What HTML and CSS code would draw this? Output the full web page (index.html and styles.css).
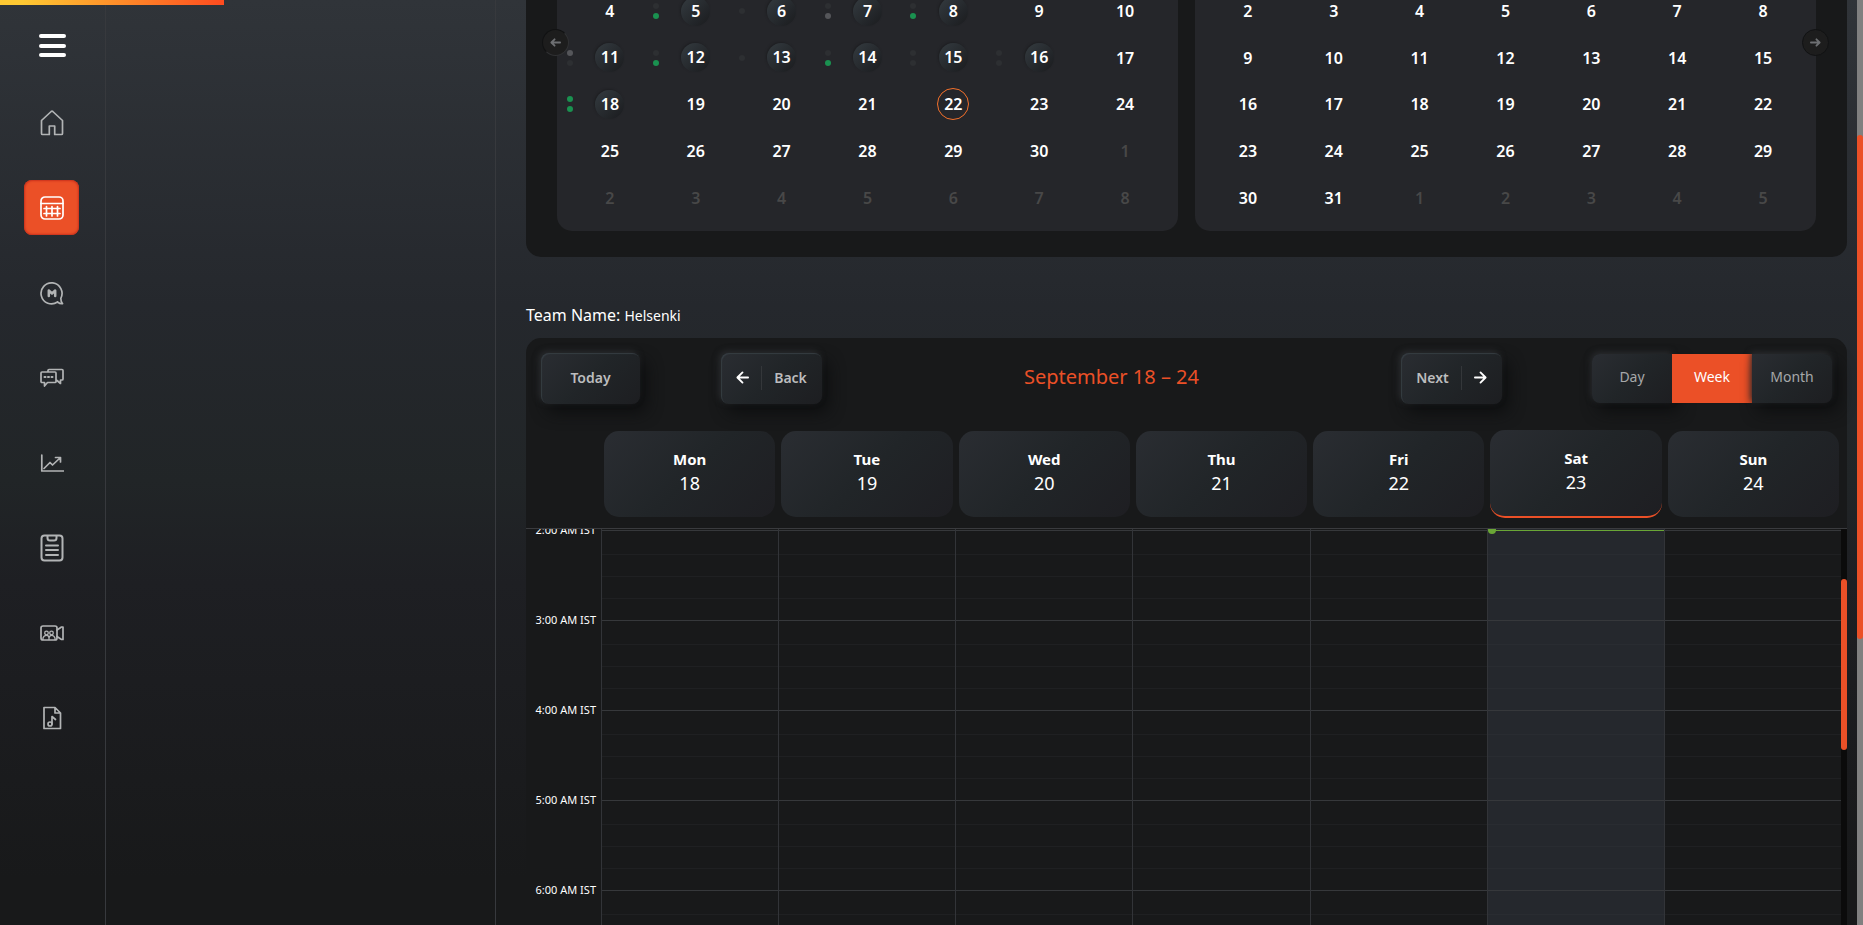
FILE: index.html
```html
<!DOCTYPE html>
<html lang="en">
<head>
<meta charset="utf-8">
<title>Calendar</title>
<link rel="stylesheet" href="styles.css">
</head>
<body>
<div class="progress"></div>
<nav class="sidebar" aria-label="Main">
  <button class="menu" aria-label="Menu"><span></span><span></span><span></span></button>
  <a class="nav-item" href="#home" aria-label="Home"><svg viewBox="0 0 24 26"><path d="M1.5 10.5V23.500q0 1 1 1H9.300V16H14.700V24.500H21.500q1 0 1-1V10.500L12.800 1.500q-.8-.7-1.600 0Z"/></svg></a>
  <a class="nav-item active" href="#calendar" aria-label="Calendar"><svg viewBox="0 0 24 24"><rect x="1" y="1" width="22" height="22" rx="4"/><path d="M1 7.500H23M4 12.500H20M4 17.500H20M6.500 10.500V20M12 10.500V20M17.500 10.500V20"/></svg></a>
  <a class="nav-item" href="#messages" aria-label="Messages"><svg viewBox="0 0 24 24"><path d="M17.500 21A10.500 10.500 0 1 1 20.800 17.300Q20.800 21 22.500 22.700Q20 23 17.500 21"/><path d="M8.800 15V9.500L12 12.500L15.200 9.500V15" stroke-width="2.500"/></svg></a>
  <a class="nav-item" href="#chat" aria-label="Chat"><svg viewBox="0 0 24 24"><path d="M1 7q0-1 1-1H15q1 0 1 1V15.500q0 1-1 1H7.500L4.500 20V16.500H2q-1 0-1-1ZM8 5.500V4.500q0-1 1-1H22q1 0 1 1V13q0 1-1 1H20.500V17.500L17 14.500"/><path d="M4.500 11h1M8 11h1M11.500 11h1" stroke-width="2"/></svg></a>
  <a class="nav-item" href="#reports" aria-label="Reports"><svg viewBox="0 0 24 24"><path d="M1.800 4V20H23.500M4 17.500L10 11.500L12.500 14L20 7M15.500 6.500H20.500V11"/></svg></a>
  <a class="nav-item" href="#notes" aria-label="Notes"><svg class="tall" viewBox="0 0 24 28"><rect x="1.500" y="1.500" width="21" height="25" rx="3"/><path d="M7.500 2V4q0 2.500 2.500 2.500h4Q16.500 6.500 16.500 4V2M6 11.500H18M6 16H18M6 21H18"/></svg></a>
  <a class="nav-item" href="#meetings" aria-label="Meetings"><svg viewBox="0 0 24 24"><rect x="1" y="5" width="16" height="14" rx="2"/><path d="M17 9L21.500 6H23V18.500H21.500L17 15.500"/><g stroke-width="1.300"><circle cx="6.500" cy="12" r="1.800"/><circle cx="11.500" cy="12" r="1.800"/><path d="M3 18.500V17q1-2.700 3.500-2.700T9 17v1.500M9 17q.5-2.700 2.700-2.700T15 17v1.500"/></g></svg></a>
  <a class="nav-item" href="#music" aria-label="Music"><svg viewBox="0 0 24 24"><path d="M4 1.500H15L20.500 7V22.500H4ZM15 2V7H20"/><circle cx="10" cy="18" r="2"/><path d="M12 18V10.500L15.500 13.500"/></svg></a>
</nav>
<aside class="side-panel"></aside>
<main class="content">
  <section class="months" aria-label="Month overview">
    <table class="month"><tbody>
      <tr><td>4</td><td><i class="dots"><b></b><b class="on"></b></i><span class="chip">5</span></td><td><i class="dots"><b></b></i><span class="chip">6</span></td><td><i class="dots"><b></b><b class="grey"></b></i><span class="chip">7</span></td><td><i class="dots"><b></b><b class="on"></b></i><span class="chip">8</span></td><td>9</td><td>10</td></tr>
      <tr><td><i class="dots"><b class="grey"></b><b></b></i><span class="chip">11</span></td><td><i class="dots"><b></b><b class="on"></b></i><span class="chip">12</span></td><td><i class="dots"><b></b></i><span class="chip">13</span></td><td><i class="dots"><b></b><b class="on"></b></i><span class="chip">14</span></td><td><i class="dots"><b></b><b></b></i><span class="chip">15</span></td><td><i class="dots"><b></b><b></b></i><span class="chip">16</span></td><td>17</td></tr>
      <tr><td><i class="dots"><b class="on"></b><b class="on"></b></i><span class="chip">18</span></td><td>19</td><td>20</td><td>21</td><td><span class="chip today">22</span></td><td>23</td><td>24</td></tr>
      <tr><td>25</td><td>26</td><td>27</td><td>28</td><td>29</td><td>30</td><td class="out">1</td></tr>
      <tr><td class="out">2</td><td class="out">3</td><td class="out">4</td><td class="out">5</td><td class="out">6</td><td class="out">7</td><td class="out">8</td></tr>
    </tbody></table>
    <table class="month"><tbody>
      <tr><td>2</td><td>3</td><td>4</td><td>5</td><td>6</td><td>7</td><td>8</td></tr>
      <tr><td>9</td><td>10</td><td>11</td><td>12</td><td>13</td><td>14</td><td>15</td></tr>
      <tr><td>16</td><td>17</td><td>18</td><td>19</td><td>20</td><td>21</td><td>22</td></tr>
      <tr><td>23</td><td>24</td><td>25</td><td>26</td><td>27</td><td>28</td><td>29</td></tr>
      <tr><td>30</td><td>31</td><td class="out">1</td><td class="out">2</td><td class="out">3</td><td class="out">4</td><td class="out">5</td></tr>
    </tbody></table>
    <button class="round prev" aria-label="Previous month"><svg viewBox="0 0 12 12"><path d="M11 6H2M5 2.500L1.500 6L5 9.500"/></svg></button>
    <button class="round next" aria-label="Next month"><svg viewBox="0 0 12 12"><path d="M1 6H10M7 2.500L10.500 6L7 9.500"/></svg></button>
  </section>

  <p class="team">Team Name: <span>Helsenki</span></p>

  <section class="schedule" aria-label="Week schedule">
    <header class="toolbar">
      <button class="btn">Today</button>
      <button class="btn back"><svg viewBox="0 0 14 14"><path d="M13 7H2M7 1.500L1.500 7L7 12.500"/></svg><span class="sep"></span>Back</button>
      <h2 class="range">September 18 – 24</h2>
      <button class="btn forward">Next<span class="sep"></span><svg viewBox="0 0 14 14"><path d="M1 7H12M7 1.500L12.500 7L7 12.500"/></svg></button>
      <div class="views"><button>Day</button><button class="selected">Week</button><button>Month</button></div>
    </header>
    <div class="day-heads">
      <div class="day"><strong>Mon</strong><span>18</span></div>
      <div class="day"><strong>Tue</strong><span>19</span></div>
      <div class="day"><strong>Wed</strong><span>20</span></div>
      <div class="day"><strong>Thu</strong><span>21</span></div>
      <div class="day"><strong>Fri</strong><span>22</span></div>
      <div class="day current"><strong>Sat</strong><span>23</span></div>
      <div class="day"><strong>Sun</strong><span>24</span></div>
    </div>
    <div class="time-view">
      <div class="gutter"><span>2:00 AM IST</span><span>3:00 AM IST</span><span>4:00 AM IST</span><span>5:00 AM IST</span><span>6:00 AM IST</span></div>
      <div class="column"></div>
      <div class="column"></div>
      <div class="column"></div>
      <div class="column"></div>
      <div class="column"></div>
      <div class="column current"><div class="now"></div></div>
      <div class="column"></div>
      <div class="scroll"><div class="scroll-thumb"></div></div>
    </div>
  </section>
</main>
<div class="page-scroll"><div class="page-thumb"></div></div>
<script src="grid.js"></script>
</body>
</html>
```

FILE: grid.js
```js
// Fill every day column with hour groups of four quarter-hour slots.
document.querySelectorAll('.column').forEach(function (column) {
  for (var hour = 0; hour < 5; hour++) {
    var group = document.createElement('div');
    group.className = 'hour';
    for (var slot = 0; slot < 4; slot++) {
      group.appendChild(document.createElement('div'));
    }
    column.appendChild(group);
  }
});
```

FILE: styles.css
```css
* { box-sizing: border-box; }

body {
  margin: 0;
  height: 100vh;
  display: flex;
  overflow: hidden;
  color: #fff;
  font-family: "Noto Sans", "Open Sans", sans-serif;
  background: linear-gradient(#303439 0%, #25282d 33%, #212527 52%, #1e1f23 63%, #18191a 95%);
}

button { font: inherit; color: inherit; border: 0; padding: 0; background: none; }
svg { fill: none; stroke: currentColor; stroke-linecap: round; stroke-linejoin: round; }

.progress {
  position: absolute;
  top: 0;
  left: 0;
  width: 12%;
  height: 5px;
  background: linear-gradient(90deg, #ffc933 10%, #ff4b1f);
}

.sidebar {
  flex: 0 0 106px;
  display: flex;
  flex-direction: column;
  gap: 30px;
  padding: 34px 0 0 24px;
  border-right: 1px solid #37393d;
}
.menu { width: 27px; height: 23px; margin: 0 0 8px 15px; display: flex; flex-direction: column; justify-content: space-between; }
.menu span { width: 27px; height: 4px; border-radius: 2px; background: #fff; }
.nav-item {
  width: 55px;
  height: 55px;
  display: grid;
  place-items: center;
  border-radius: 8px;
  color: #b2b4b5;
}
.nav-item svg { width: 24px; height: 26px; stroke-width: 1.700; }
.nav-item svg.tall { height: 28px; stroke-width: 2; }
.nav-item.active { color: #fff; background: #eb5027; box-shadow: inset 0 0 2px 1px #c8301c; }

.side-panel { flex: 0 0 390px; border-right: 1px solid #37393d; }

.content { flex: 1; min-width: 0; padding: 0 10px 0 30px; display: flex; flex-direction: column; }

.months {
  position: relative;
  display: grid;
  grid-template-columns: 1fr 1fr;
  gap: 17px;
  margin-top: -12px;
  padding: 0 31px 26px;
  border-radius: 0 0 15px 15px;
  background: #18191a;
}
.month {
  width: 100%;
  height: 243px;
  table-layout: fixed;
  border-spacing: 0;
  padding: 0 10px 10px;
  border-radius: 0 0 15px 15px;
  background: #25262a;
  font-size: 16px;
  font-weight: 600;
  line-height: 20px;
  text-align: center;
}
.month tr { height: 20%; }
.month td { position: relative; padding: 0; }
.month .out { color: #484848; }
.chip {
  display: block;
  width: 29px;
  height: 29px;
  margin: 0 auto;
  border-radius: 50%;
  line-height: 28px;
  background: linear-gradient(135deg, #343b40, #1a1b1e);
  box-shadow: -1px -1px 2px #1e1f22;
}
.chip.today { width: 32px; height: 32px; line-height: 30px; border: 1px solid #f3702a; background: none; box-shadow: none; }
.dots {
  position: absolute;
  top: 0;
  bottom: 0;
  left: 0;
  display: flex;
  flex-direction: column;
  justify-content: center;
  gap: 4px;
}
.dots b { width: 6px; height: 6px; border-radius: 50%; background: #2d2f32; }
.dots .on { background: #1a9150; }
.dots .grey { background: #55565a; }
.round {
  position: absolute;
  top: 41px;
  width: 27px;
  height: 27px;
  display: grid;
  place-items: center;
  border: 1px solid #111213;
  border-radius: 50%;
  background: #1d1d1d;
  color: #6d6f72;
}
.round svg { width: 11px; height: 11px; stroke-width: 2; }
.prev { left: 16px; border-color: #111213 #303133 #303133 #111213; }
.next { right: 18px; }

.team { margin: 46px 0 10px; font-size: 16px; line-height: 24px; }
.team span { font-size: 14px; }

.schedule { flex: 1; min-height: 0; display: flex; flex-direction: column; border-radius: 15px 15px 0 0; background: #18191a; }
.toolbar {
  display: grid;
  grid-template-columns: 99px 101px 1fr 110px 240px;
  column-gap: 81px;
  align-items: center;
  padding: 15px 15px 0;
}
.btn {
  height: 51px;
  padding-bottom: 2px;
  display: flex;
  align-items: center;
  justify-content: center;
  border-radius: 8px;
  color: #bcbdbe;
  font-size: 14px;
  font-weight: 600;
  background: linear-gradient(135deg, #2a2d32, #212528 50%, #1d1e21);
  box-shadow: inset 1px 1px 1px #363d42, -2px -2px 6px #2a2c2f, 6px 8px 16px #0d0e0f;
}
.btn svg { width: 13px; height: 13px; color: #fff; stroke-width: 2; }
.forward { width: 101px; }
.sep { width: 1px; height: 24px; margin: 0 12px; background: #34373a; }
.range { margin: 0; padding-bottom: 4px; color: #eb5027; font-size: 20px; font-weight: 400; line-height: 28px; text-align: center; }
.views { display: grid; grid-template-columns: 1fr 1fr 1fr; height: 49px; font-size: 14px; color: #a6a8a9; }
.views button {
  padding-bottom: 4px;
  background: linear-gradient(135deg, #2a2d32, #212528 50%, #1d1e21);
  box-shadow: -1px -2px 6px #2a2c2f, 6px 8px 16px #0d0e0f;
}
.views button:first-child { border-radius: 8px 0 0 8px; }
.views button:last-child { border-radius: 0 8px 8px 0; }
.views .selected { color: #fff; background: #eb5027; box-shadow: none; }

.day-heads {
  display: grid;
  grid-template-columns: repeat(7, 1fr);
  gap: 6px;
  padding: 26px 8px 10px 78px;
  border-bottom: 1px solid #3a3b3e;
}
.day {
  height: 86px;
  margin: 1px 0;
  padding-bottom: 6px;
  display: flex;
  flex-direction: column;
  align-items: center;
  justify-content: center;
  border-radius: 15px;
  background: linear-gradient(135deg, #2a2d32, #212528 50%, #1e1e22);
}
.day.current { height: 88px; margin: 0; border-bottom: 2px solid #eb5027; }
.day strong { font-size: 15px; line-height: 24px; }
.day span { font-size: 18px; line-height: 24px; }

.time-view {
  flex: 1;
  min-height: 0;
  display: grid;
  grid-template-columns: 75px repeat(7, 1fr) 6px;
  overflow: hidden;
}
.gutter { display: flex; flex-direction: column; margin-top: -9px; padding-right: 5px; font-size: 11px; line-height: 20px; text-align: right; }
.gutter span { flex: 0 0 90px; }
.column { position: relative; border-left: 1px solid #323438; padding-top: 1px; }
.column::before { content: ""; display: block; height: 1px; background: #36383b; }
.hour { display: grid; grid-template-rows: 23px 22px 22px 22px; border-bottom: 1px solid #36383b; }
.hour div + div { border-top: 1px solid #1f2022; }
.column.current { background: #25282d; }
.column.current .hour div + div { border-color: #292c31; }
.now { position: absolute; top: 1px; left: 0; right: 0; height: 1px; background: #6aa636; }
.now::before { content: ""; position: absolute; top: -4px; left: 0; width: 8px; height: 8px; border-radius: 50%; background: #6aa636; }

.scroll { background: #0b0b0b; padding-top: 50px; }
.scroll-thumb { height: 171px; border-radius: 3px; background: #eb5027; }
.page-scroll { flex: 0 0 6px; padding-top: 135px; background: #808080; }
.page-thumb { height: 504px; border-radius: 3px; background: #eb5027; }
```
